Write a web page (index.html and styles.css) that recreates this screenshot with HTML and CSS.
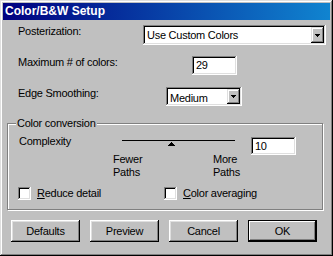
FILE: index.html
```html
<!DOCTYPE html>
<html lang="en">
    <head>
        <meta charset="UTF-8" />
        <meta name="viewport" content="width=device-width, initial-scale=1.0" />
        <title>Color/B&amp;W Setup</title>
        <link rel="stylesheet" href="styles.css">
    </head>
    <body>
        <div id="dialog">
            <div id="titlebar">Color/B&amp;W Setup</div>

            <div class="row row-poster">
                <span class="label label-poster">Posterization:</span>
                <div class="field select select-poster">
                    <span>Use Custom Colors</span>
                    <span class="drop">
                        <svg width="5" height="3" viewBox="0 0 5 3"><path d="M0 0h5v1H0zM1 1h3v1H1zM2 2h1v1H2z" fill="#000"/></svg>
                    </span>
                </div>
            </div>

            <div class="row row-max">
                <span class="label label-max">Maximum # of colors:</span>
                <div class="field num">29</div>
            </div>

            <div class="row row-edge">
                <span class="label label-edge">Edge Smoothing:</span>
                <div class="field select select-edge">
                    <span>Medium</span>
                    <span class="drop">
                        <svg width="5" height="3" viewBox="0 0 5 3"><path d="M0 0h5v1H0zM1 1h3v1H1zM2 2h1v1H2z" fill="#000"/></svg>
                    </span>
                </div>
            </div>

            <fieldset id="group">
                <legend>Color conversion</legend>
                <div class="complexity">
                    <span class="complexity-label">Complexity</span>
                    <div class="slider">
                        <div class="slider-line"></div>
                        <svg class="thumb" width="7" height="4" viewBox="0 0 7 4"><path d="M3 0h1v1H3zM2 1h3v1H2zM1 2h5v1H1zM0 3h7v1H0z" fill="#000"/></svg>
                    </div>
                    <div class="field num num-complexity">10</div>
                </div>
                <div class="scale">
                    <span>Fewer<br>Paths</span>
                    <span>More<br>Paths</span>
                </div>
                <div class="checks">
                    <label class="check-item check-first"><span class="check"></span><span><u>R</u>educe detail</span></label>
                    <label class="check-item"><span class="check"></span><span><u>C</u>olor averaging</span></label>
                </div>
            </fieldset>

            <div id="buttons">
                <button class="btn">Defaults</button>
                <button class="btn">Preview</button>
                <button class="btn">Cancel</button>
                <button class="btn btn-default">OK</button>
            </div>
        </div>
    </body>
</html>
```

FILE: styles.css
```css
body {
    margin: 0;
    font-family: "Liberation Sans", Arial, sans-serif;
    font-size: 11px;
    line-height: 13px;
    letter-spacing: -0.25px;
    color: #000;
}
#dialog {
    width: 333px;
    height: 256px;
    box-sizing: border-box;
    padding: 3px;
    background-color: #c0c0c0;
    box-shadow: inset -1px -1px #000, inset 1px 1px #dfdfdf, inset -2px -2px #808080, inset 2px 2px #fff;
}
#titlebar {
    height: 17px;
    line-height: 17px;
    padding-left: 2px;
    background: linear-gradient(to right, #000080, #1084d0);
    color: #fff;
    font-weight: bold;
    font-size: 12px;
    letter-spacing: 0;
}
.row {
    display: flex;
    align-items: flex-start;
    padding-left: 15px;
}
.row-poster {
    margin-top: 5px;
}
.row-max {
    margin-top: 11px;
}
.row-edge {
    margin-top: 12px;
}
.label {
    flex: none;
}
.label-poster {
    width: 125px;
}
.label-max {
    width: 174px;
}
.label-edge {
    width: 148px;
}
.field {
    box-sizing: border-box;
    background-color: #fff;
    box-shadow: inset -1px -1px #fff, inset 1px 1px #808080, inset -2px -2px #dfdfdf, inset 2px 2px #000;
}
.select {
    display: flex;
    justify-content: space-between;
    padding: 4px 2px 0 4px;
}
.select-poster {
    width: 183px;
    height: 20px;
}
.select-edge {
    width: 76px;
    height: 19px;
    padding-top: 5px;
}
.drop {
    box-sizing: border-box;
    width: 13px;
    height: 16px;
    margin-top: -2px;
    display: flex;
    align-items: center;
    justify-content: center;
    background-color: #c0c0c0;
    box-shadow: inset -1px -1px #000, inset 1px 1px #dfdfdf, inset -2px -2px #808080, inset 2px 2px #fff;
}
.select-edge .drop {
    height: 15px;
    margin-top: -3px;
}
.num {
    width: 45px;
    height: 19px;
    padding: 3px 4px 0 4px;
}
#group {
    margin: 11px 0 0 4px;
    width: 316px;
    min-width: 0;
    box-sizing: border-box;
    border: 1px solid #808080;
    box-shadow: inset 1px 1px #fff, 1px 1px #fff;
    padding: 5px 8px 9px 11px;
}
#group legend {
    margin-left: -3px;
    padding: 0 1px;
    background-color: #c0c0c0;
    line-height: 13px;
}
.complexity {
    display: flex;
    align-items: flex-start;
}
.complexity-label {
    width: 103px;
    flex: none;
}
.slider {
    width: 113px;
    margin-top: 5px;
}
.slider-line {
    height: 1px;
    background-color: #000;
}
.thumb {
    display: block;
    margin: 1px 0 0 46px;
}
.num-complexity {
    margin-left: 16px;
    margin-top: 2px;
    height: 18px;
}
.scale {
    display: flex;
    margin: -2px 0 0 94px;
}
.scale span {
    width: 100px;
}
.checks {
    display: flex;
    margin: 8px 0 0 -1px;
}
.check-item {
    display: flex;
    gap: 6px;
}
.check-first {
    width: 146px;
}
.check {
    width: 13px;
    height: 13px;
    box-sizing: border-box;
    background-color: #fff;
    box-shadow: inset -1px -1px #fff, inset 1px 1px #808080, inset -2px -2px #dfdfdf, inset 2px 2px #000;
}
#buttons {
    display: flex;
    gap: 10px;
    margin: 10px 0 0 8px;
}
.btn {
    width: 69px;
    height: 22px;
    padding: 0;
    border: none;
    background-color: #c0c0c0;
    font: inherit;
    letter-spacing: inherit;
    color: #000;
    box-shadow: inset -1px -1px #000, inset 1px 1px #fff, inset -2px -2px #808080, inset 2px 2px #dfdfdf;
}
.btn-default {
    box-shadow: inset 0 0 0 1px #000, inset -2px -2px #000, inset 2px 2px #fff, inset -3px -3px #808080;
}
```
